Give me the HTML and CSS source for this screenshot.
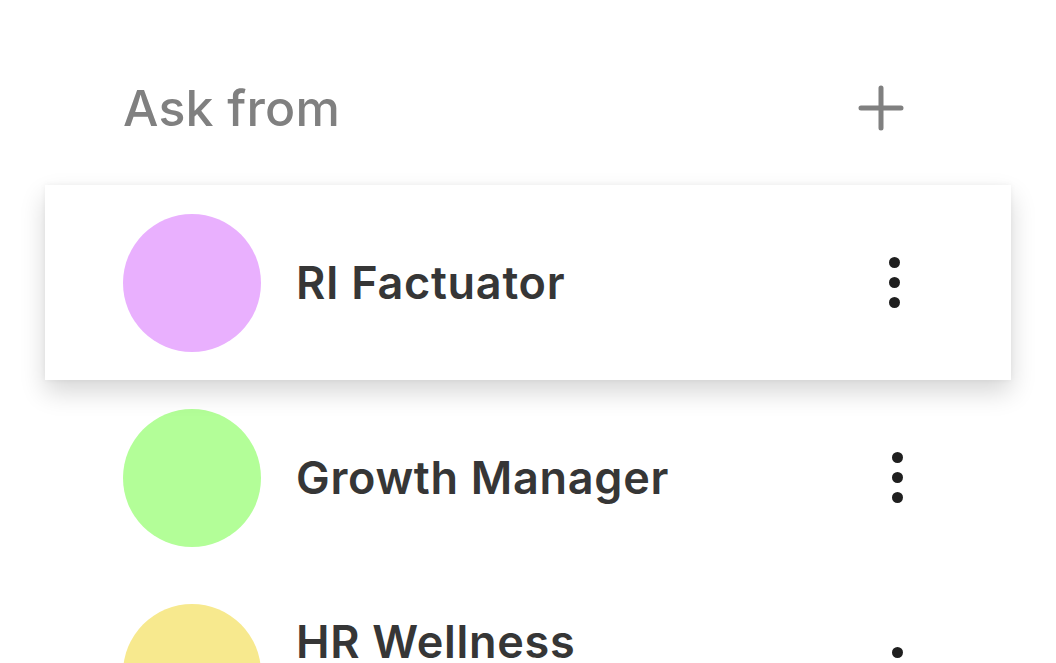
FILE: index.html
```html
<!DOCTYPE html>
<html>
<head>
<meta charset="utf-8">
<link rel="stylesheet" href="styles.css">
</head>
<body>
<div class="panel">
  <div class="header">
    <span class="title">Ask from</span>
    <svg class="plus" width="46" height="46" viewBox="0 0 46 46"><path d="M23 3V43M3 23H43" stroke="#808080" stroke-width="5" stroke-linecap="round"/></svg>
  </div>
  <div class="list">
    <div class="row active">
      <div class="avatar pink"></div>
      <span class="name">RI Factuator</span>
      <div class="kebab"><i></i><i></i><i></i></div>
    </div>
    <div class="row">
      <div class="avatar green"></div>
      <span class="name">Growth Manager</span>
      <div class="kebab shift"><i></i><i></i><i></i></div>
    </div>
    <div class="row">
      <div class="avatar yellow"></div>
      <span class="name raised">HR Wellness</span>
      <div class="kebab shift"><i></i><i></i><i></i></div>
    </div>
  </div>
</div>
</body>
</html>
```
FILE: styles.css
```css
html, body {
  margin: 0;
  padding: 0;
  background: #ffffff;
  overflow: hidden;
}
body {
  font-family: Inter, "Noto Sans", sans-serif;
  width: 1056px;
  height: 663px;
}
.header {
  height: 70px;
  margin-top: 73px;
  display: flex;
  align-items: center;
  justify-content: space-between;
  padding: 0 152px 0 123px;
}
.title {
  font-size: 50px;
  font-weight: 500;
  color: #808080;
  letter-spacing: 0.2px;
}
.plus {
  display: block;
}
.list {
  margin: 42px 45px 0 45px;
}
.row {
  height: 195px;
  display: flex;
  align-items: center;
  padding: 0 111px 0 78px;
  background: #fff;
}
.row.active {
  box-shadow: 0 12px 24px rgba(0,0,0,0.16), 0 0 6px rgba(0,0,0,0.05);
  position: relative;
  z-index: 1;
}
.avatar {
  width: 138px;
  height: 138px;
  border-radius: 50%;
  flex: none;
}
.pink { background: #e9b0fe; }
.green { background: #b3fe98; }
.yellow { background: #f7e98e; }
.name {
  margin-left: 35px;
  font-size: 45px;
  font-weight: 600;
  color: #363636;
  letter-spacing: 0.7px;
  flex: 1;
}
.name.raised {
  margin-bottom: 62px;
}
.kebab {
  display: flex;
  flex-direction: column;
  gap: 9px;
  width: 11px;
}
.kebab.shift {
  margin-right: -3px;
}
.kebab i {
  display: block;
  width: 11px;
  height: 11px;
  border-radius: 50%;
  background: #1f1f1f;
}
```
